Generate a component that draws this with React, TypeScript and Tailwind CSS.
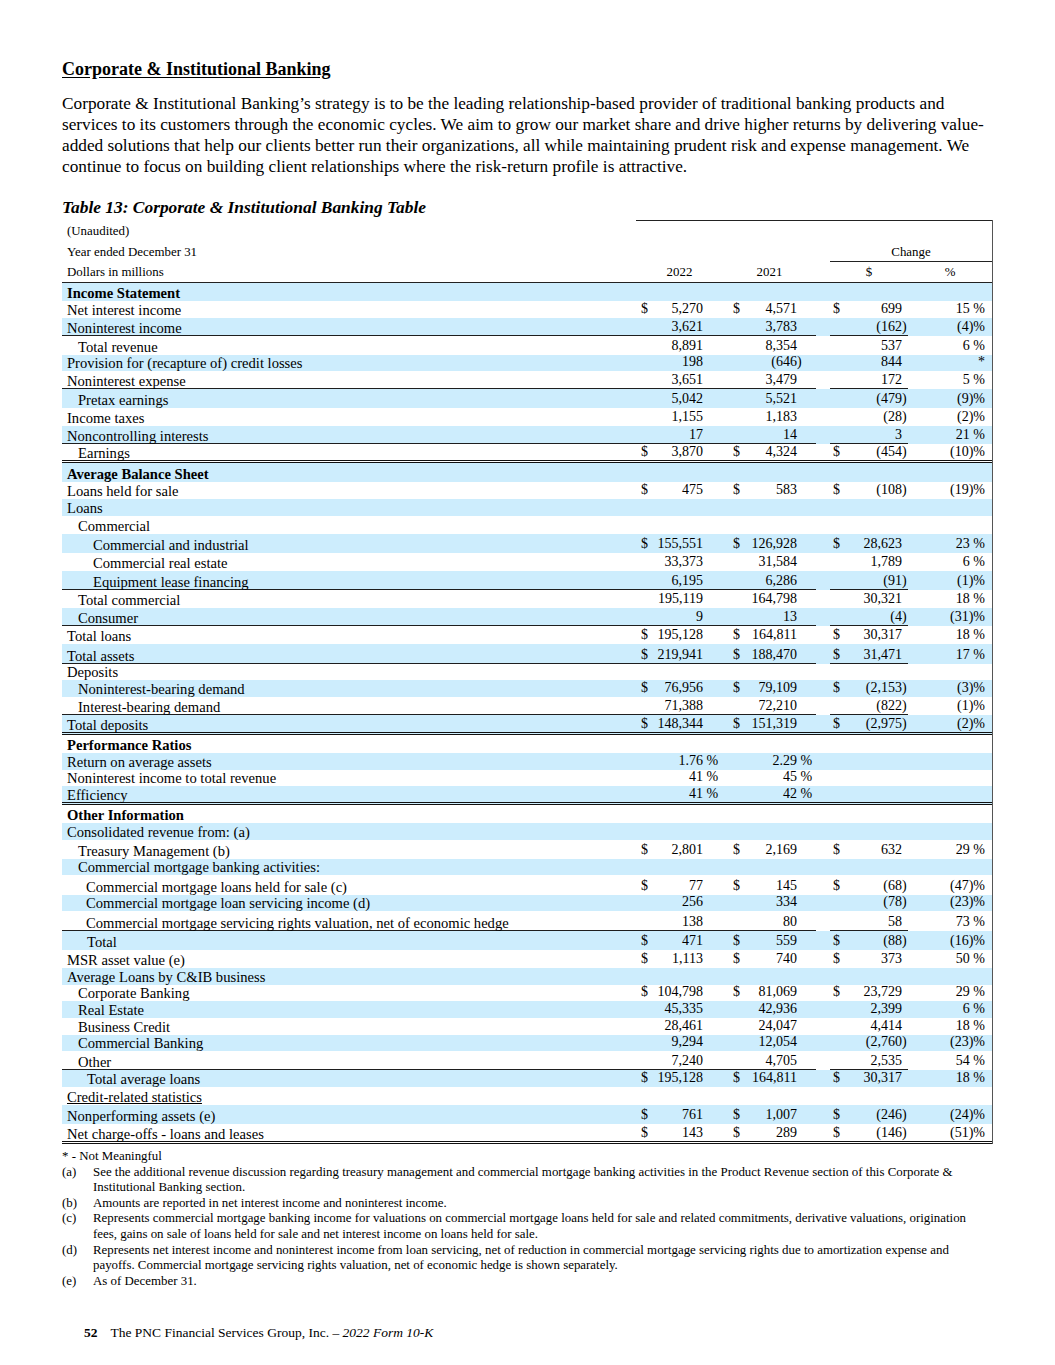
type Row = {
  t: string;
  h: string;
  ind?: string;
  b?: boolean;
  blue?: boolean;
  line?: 'single' | 'double';
  u?: boolean;
  c?: string[];
};

const rows: Row[] = [
  { t: 'Income Statement', h: 'h-[18px]', b: true, blue: true },
  { t: 'Net interest income', h: 'h-[17px]', c: ['$5,270', '$4,571', '$699', '15 %'] },
  { t: 'Noninterest income', h: 'h-[18px]', blue: true, line: 'single', c: ['3,621', '3,783', '(162)', '(4)%'] },
  { t: 'Total revenue', h: 'h-[19px]', ind: 'pl-[16px]', c: ['8,891', '8,354', '537', '6 %'] },
  { t: 'Provision for (recapture of) credit losses', h: 'h-[16px]', blue: true, c: ['198', '(646)', '844', '*'] },
  { t: 'Noninterest expense', h: 'h-[18px]', line: 'single', c: ['3,651', '3,479', '172', '5 %'] },
  { t: 'Pretax earnings', h: 'h-[19px]', ind: 'pl-[16px]', blue: true, c: ['5,042', '5,521', '(479)', '(9)%'] },
  { t: 'Income taxes', h: 'h-[18px]', c: ['1,155', '1,183', '(28)', '(2)%'] },
  { t: 'Noncontrolling interests', h: 'h-[18px]', blue: true, line: 'single', c: ['17', '14', '3', '21 %'] },
  { t: 'Earnings', h: 'h-[19px]', ind: 'pl-[16px]', line: 'double', c: ['$3,870', '$4,324', '$(454)', '(10)%'] },
  { t: 'Average Balance Sheet', h: 'h-[19px]', b: true, blue: true },
  { t: 'Loans held for sale', h: 'h-[17px]', c: ['$475', '$583', '$(108)', '(19)%'] },
  { t: 'Loans', h: 'h-[17px]', blue: true },
  { t: 'Commercial', h: 'h-[18px]', ind: 'pl-[16px]' },
  { t: 'Commercial and industrial', h: 'h-[19px]', ind: 'pl-[31px]', blue: true, c: ['$155,551', '$126,928', '$28,623', '23 %'] },
  { t: 'Commercial real estate', h: 'h-[18px]', ind: 'pl-[31px]', c: ['33,373', '31,584', '1,789', '6 %'] },
  { t: 'Equipment lease financing', h: 'h-[19px]', ind: 'pl-[31px]', blue: true, line: 'single', c: ['6,195', '6,286', '(91)', '(1)%'] },
  { t: 'Total commercial', h: 'h-[18px]', ind: 'pl-[16px]', c: ['195,119', '164,798', '30,321', '18 %'] },
  { t: 'Consumer', h: 'h-[18px]', ind: 'pl-[16px]', blue: true, line: 'single', c: ['9', '13', '(4)', '(31)%'] },
  { t: 'Total loans', h: 'h-[18px]', c: ['$195,128', '$164,811', '$30,317', '18 %'] },
  { t: 'Total assets', h: 'h-[20px]', blue: true, line: 'single', c: ['$219,941', '$188,470', '$31,471', '17 %'] },
  { t: 'Deposits', h: 'h-[16px]' },
  { t: 'Noninterest-bearing demand', h: 'h-[17px]', ind: 'pl-[16px]', blue: true, c: ['$76,956', '$79,109', '$(2,153)', '(3)%'] },
  { t: 'Interest-bearing demand', h: 'h-[18px]', ind: 'pl-[16px]', line: 'single', c: ['71,388', '72,210', '(822)', '(1)%'] },
  { t: 'Total deposits', h: 'h-[20px]', blue: true, line: 'double', c: ['$148,344', '$151,319', '$(2,975)', '(2)%'] },
  { t: 'Performance Ratios', h: 'h-[18px]', b: true },
  { t: 'Return on average assets', h: 'h-[17px]', blue: true, c: ['1.76 %', '2.29 %'] },
  { t: 'Noninterest income to total revenue', h: 'h-[16px]', c: ['41 %', '45 %'] },
  { t: 'Efficiency', h: 'h-[19px]', blue: true, line: 'double', c: ['41 %', '42 %'] },
  { t: 'Other Information', h: 'h-[18px]', b: true },
  { t: 'Consolidated revenue from: (a)', h: 'h-[17px]', blue: true },
  { t: 'Treasury Management (b)', h: 'h-[19px]', ind: 'pl-[16px]', c: ['$2,801', '$2,169', '$632', '29 %'] },
  { t: 'Commercial mortgage banking activities:', h: 'h-[16px]', ind: 'pl-[16px]', blue: true },
  { t: 'Commercial mortgage loans held for sale (c)', h: 'h-[20px]', ind: 'pl-[24px]', c: ['$77', '$145', '$(68)', '(47)%'] },
  { t: 'Commercial mortgage loan servicing income (d)', h: 'h-[16px]', ind: 'pl-[24px]', blue: true, c: ['256', '334', '(78)', '(23)%'] },
  { t: 'Commercial mortgage servicing rights valuation, net of economic hedge', h: 'h-[20px]', ind: 'pl-[24px]', line: 'single', c: ['138', '80', '58', '73 %'] },
  { t: 'Total', h: 'h-[19px]', ind: 'pl-[25px]', blue: true, c: ['$471', '$559', '$(88)', '(16)%'] },
  { t: 'MSR asset value (e)', h: 'h-[18px]', c: ['$1,113', '$740', '$373', '50 %'] },
  { t: 'Average Loans by C&IB business', h: 'h-[17px]', blue: true },
  { t: 'Corporate Banking', h: 'h-[16px]', ind: 'pl-[16px]', c: ['$104,798', '$81,069', '$23,729', '29 %'] },
  { t: 'Real Estate', h: 'h-[17px]', ind: 'pl-[16px]', blue: true, c: ['45,335', '42,936', '2,399', '6 %'] },
  { t: 'Business Credit', h: 'h-[17px]', ind: 'pl-[16px]', c: ['28,461', '24,047', '4,414', '18 %'] },
  { t: 'Commercial Banking', h: 'h-[16px]', ind: 'pl-[16px]', blue: true, c: ['9,294', '12,054', '(2,760)', '(23)%'] },
  { t: 'Other', h: 'h-[19px]', ind: 'pl-[16px]', line: 'single', c: ['7,240', '4,705', '2,535', '54 %'] },
  { t: 'Total average loans', h: 'h-[17px]', ind: 'pl-[25px]', blue: true, c: ['$195,128', '$164,811', '$30,317', '18 %'] },
  { t: 'Credit-related statistics', h: 'h-[18px]', u: true },
  { t: 'Nonperforming assets (e)', h: 'h-[19px]', blue: true, c: ['$761', '$1,007', '$(246)', '(24)%'] },
  { t: 'Net charge-offs - loans and leases', h: 'h-[20px]', line: 'double', c: ['$143', '$289', '$(146)', '(51)%'] },
];

const Money = ({ v, suf }: { v?: string; suf: string }) => {
  if (!v) return null;
  const d = v.startsWith('$');
  let s = d ? v.slice(1) : v;
  let tail = '';
  if (s.endsWith(')')) {
    tail = ')';
    s = s.slice(0, -1);
  } else if (s.endsWith(' %')) {
    tail = '\u00a0%';
    s = s.slice(0, -2);
  }
  return (
    <>
      <span className="leading-[16px]">{d ? '$' : ''}</span>
      <span className="flex-1 text-right leading-[16px]">{s}</span>
      <span className={`${suf} leading-[16px] whitespace-nowrap`}>{tail}</span>
    </>
  );
};

const TableRow = ({ r }: { r: Row }) => {
  const ln =
    r.line === 'single'
      ? 'border-b border-[#1e1e1e]'
      : r.line === 'double'
        ? ''
        : 'border-b border-transparent';
  const none = r.line === 'double' ? '' : 'border-b border-transparent';
  const c = r.c || [];
  return (
    <div
      className={`flex ${r.h} ${r.blue ? 'bg-[#cdedfd]' : ''} ${
        r.line === 'double' ? 'border-b-[3px] border-double border-[#111]' : ''
      }`}
    >
      <div className={`w-[574px] flex items-end text-[14.6px] ${r.ind || 'pl-[5px]'} ${ln} ${r.b ? 'font-bold' : ''}`}>
        <span className={`leading-[14px] whitespace-nowrap ${r.u ? 'underline' : ''}`}>{r.t}</span>
      </div>
      <div className={`w-[87px] flex items-end pl-[5px] ${ln}`}>
        <Money v={c[0]} suf="w-[20px]" />
      </div>
      <div className={`w-[93px] flex items-end pl-[10px] ${ln}`}>
        <Money v={c[1]} suf="w-[19px]" />
      </div>
      <div className={`w-[14px] ${none}`} />
      <div className={`w-[78px] flex items-end pl-[3px] ${ln}`}>
        <Money v={c[2]} suf="w-[6px]" />
      </div>
      <div className={`w-[84px] flex items-end justify-end pr-[7px] ${none}`}>
        <span className="leading-[16px] whitespace-nowrap">{c[3]}</span>
      </div>
    </div>
  );
};

const notes: [string, string[]][] = [
  ['(a)', [
    'See the additional revenue discussion regarding treasury management and commercial mortgage banking activities in the Product Revenue section of this Corporate &',
    'Institutional Banking section.',
  ]],
  ['(b)', ['Amounts are reported in net interest income and noninterest income.']],
  ['(c)', [
    'Represents commercial mortgage banking income for valuations on commercial mortgage loans held for sale and related commitments, derivative valuations, origination',
    'fees, gains on sale of loans held for sale and net interest income on loans held for sale.',
  ]],
  ['(d)', [
    'Represents net interest income and noninterest income from loan servicing, net of reduction in commercial mortgage servicing rights due to amortization expense and',
    'payoffs. Commercial mortgage servicing rights valuation, net of economic hedge is shown separately.',
  ]],
  ['(e)', ['As of December 31.']],
];

const App = () => {
  return (
    <div className="w-[1055px] min-h-[1365px] bg-white pl-[62px] pt-[59px] text-black font-['Liberation_Serif','Times_New_Roman',serif]">
      <h2 className="text-[18px] leading-[20px] font-bold underline underline-offset-2">Corporate &amp; Institutional Banking</h2>

      <div className="mt-[14px] text-[17.25px] leading-[21px]">
        <div className="whitespace-nowrap">Corporate &amp; Institutional Banking’s strategy is to be the leading relationship-based provider of traditional banking products and</div>
        <div className="whitespace-nowrap">services to its customers through the economic cycles. We aim to grow our market share and drive higher returns by delivering value-</div>
        <div className="whitespace-nowrap">added solutions that help our clients better run their organizations, all while maintaining prudent risk and expense management. We</div>
        <div className="whitespace-nowrap">continue to focus on building client relationships where the risk-return profile is attractive.</div>
      </div>

      <div className="mt-[20px] text-[17.4px] leading-[20px] font-bold italic">Table 13: Corporate &amp; Institutional Banking Table</div>

      <div className="mt-[3px] w-[931px] border-r border-[#555] text-[14px]">
        <div className="flex h-[21px] text-[12.9px]">
          <div className="w-[574px] flex items-center pt-[3px] pl-[5px]">(Unaudited)</div>
          <div className="w-[356px] border-t border-[#222]" />
        </div>
        <div className="flex h-[21px] text-[12.9px]">
          <div className="w-[574px] flex items-center pt-[3px] pl-[5px]">Year ended December 31</div>
          <div className="w-[194px]" />
          <div className="w-[162px] flex items-center justify-center pt-[3px] border-b border-[#222]">Change</div>
        </div>
        <div className="flex h-[21px] text-[12.9px] border-b border-[#222]">
          <div className="w-[574px] flex items-center pt-[2px] pl-[5px]">Dollars in millions</div>
          <div className="w-[87px] flex items-center pt-[2px] justify-center">2022</div>
          <div className="w-[93px] flex items-center pt-[2px] justify-center">2021</div>
          <div className="w-[14px]" />
          <div className="w-[78px] flex items-center pt-[2px] justify-center">$</div>
          <div className="w-[84px] flex items-center pt-[2px] justify-center">%</div>
        </div>
        {rows.map((r, i) => (
          <TableRow key={i} r={r} />
        ))}
      </div>

      <div className="mt-[5px] text-[12.9px] leading-[15.6px]">
        <div>* - Not Meaningful</div>
        {notes.map(([k, lines]) => (
          <div key={k} className="flex">
            <div className="w-[31px]">{k}</div>
            <div>
              {lines.map((l, j) => (
                <div key={j} className="whitespace-nowrap">{l}</div>
              ))}
            </div>
          </div>
        ))}
      </div>

      <div className="mt-[36px] pl-[22px] text-[13.5px] leading-[16px] whitespace-nowrap">
        <span className="font-bold">52</span>
        <span className="ml-[13px]">The PNC Financial Services Group, Inc. – </span>
        <span className="italic">2022 Form 10-K</span>
      </div>
    </div>
  );
};

export default App;
